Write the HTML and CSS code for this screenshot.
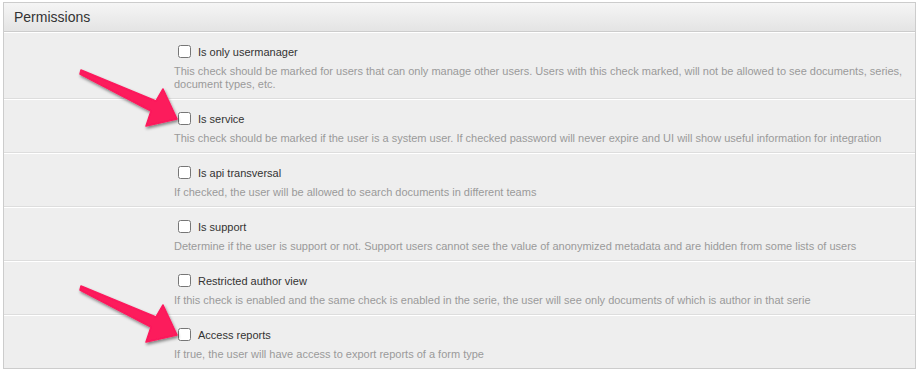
FILE: index.html
```html
<!DOCTYPE html>
<html lang="en">
<head>
    <meta charset="UTF-8">
    <title>Permissions</title>
    <link rel="stylesheet" href="styles.css">
</head>
<body>
    <div class="panel">
        <div class="panel-heading">Permissions</div>

        <div class="perm-row">
            <div class="perm-spacer"></div>
            <div class="perm-field">
                <label class="check"><input type="checkbox"> Is only usermanager</label>
                <p class="help">This check should be marked for users that can only manage other users. Users with this check marked, will not be allowed to see documents, series, document types, etc.</p>
            </div>
        </div>

        <div class="perm-row">
            <div class="perm-spacer"></div>
            <div class="perm-field">
                <label class="check"><input type="checkbox"> Is service</label>
                <p class="help">This check should be marked if the user is a system user. If checked password will never expire and UI will show useful information for integration</p>
            </div>
        </div>

        <div class="perm-row">
            <div class="perm-spacer"></div>
            <div class="perm-field">
                <label class="check"><input type="checkbox"> Is api transversal</label>
                <p class="help">If checked, the user will be allowed to search documents in different teams</p>
            </div>
        </div>

        <div class="perm-row">
            <div class="perm-spacer"></div>
            <div class="perm-field">
                <label class="check"><input type="checkbox"> Is support</label>
                <p class="help">Determine if the user is support or not. Support users cannot see the value of anonymized metadata and are hidden from some lists of users</p>
            </div>
        </div>

        <div class="perm-row">
            <div class="perm-spacer"></div>
            <div class="perm-field">
                <label class="check"><input type="checkbox"> Restricted author view</label>
                <p class="help">If this check is enabled and the same check is enabled in the serie, the user will see only documents of which is author in that serie</p>
            </div>
        </div>

        <div class="perm-row">
            <div class="perm-spacer"></div>
            <div class="perm-field">
                <label class="check"><input type="checkbox"> Access reports</label>
                <p class="help">If true, the user will have access to export reports of a form type</p>
            </div>
        </div>
    </div>

    <!-- annotation arrows drawn over the panel -->
    <svg class="arrows" width="918" height="369" viewBox="0 0 918 369">
        <defs>
            <filter id="shadow" x="-20%" y="-20%" width="140%" height="160%">
                <feDropShadow dx="1" dy="2" stdDeviation="1.6" flood-color="#000" flood-opacity="0.45"/>
            </filter>
        </defs>
        <g filter="url(#shadow)" fill="#fc1a5c" stroke="#fc1a5c" stroke-width="1.5" stroke-linejoin="round">
            <polygon points="81,70 156,101 163,89 177,119 146,126 151,111 80,74"/>
            <polygon points="81,286 156,317 163,305 177,335 146,342 151,327 80,290"/>
        </g>
    </svg>
</body>
</html>
```

FILE: styles.css
```css
body {
    font-family: "Liberation Sans", Arial, sans-serif;
    margin: 0;
    padding: 2px 2px 0 3px;
    background-color: #ffffff;
    position: relative;
}

.panel {
    border: 1px solid #cccccc;
    background-color: #eeeeee;
}

.panel-heading {
    height: 28px;
    line-height: 28px;
    padding: 0 10px;
    font-size: 14px;
    color: #333333;
    background: linear-gradient(#f5f5f5, #e4e4e4);
    border-bottom: 1px solid #cccccc;
}

.perm-row {
    display: flex;
    padding: 9px 0 7px;
    border-top: 1px solid #ffffff;
    border-bottom: 1px solid #dddddd;
}

.perm-row:first-of-type {
    border-top: none;
}

.perm-row:last-child {
    border-bottom: none;
}

.perm-spacer {
    width: 170px;
    flex-shrink: 0;
}

.perm-field {
    flex: 1;
    padding-right: 8px;
}

.check {
    display: flex;
    align-items: center;
    height: 19px;
    font-size: 11px;
    color: #333333;
}

.check input {
    width: 13px;
    height: 13px;
    margin: 3px 7px 3px 4px;
}

.help {
    margin: 4px 0 0;
    font-size: 11px;
    line-height: 13px;
    color: #9a9a9a;
}

.arrows {
    position: absolute;
    left: 0;
    top: 0;
    pointer-events: none;
}
```
